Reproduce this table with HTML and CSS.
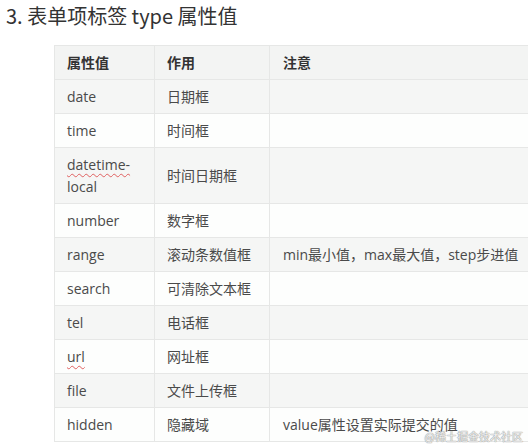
FILE: index.html
```html
<!DOCTYPE html>
<html lang="zh-CN">
<head>
<meta charset="utf-8">
<link rel="stylesheet" href="styles.css">
</head>
<body>
<div class="page">
  <h3 class="title">3. 表单项标签 type 属性值</h3>
  <table class="attr-table">
    <colgroup>
      <col class="c1"><col class="c2"><col class="c3">
    </colgroup>
    <thead>
      <tr><th>属性值</th><th>作用</th><th>注意</th></tr>
    </thead>
    <tbody>
      <tr><td>date</td><td>日期框</td><td></td></tr>
      <tr><td>time</td><td>时间框</td><td></td></tr>
      <tr><td><span class="spell">datetime-</span><br>local</td><td>时间日期框</td><td></td></tr>
      <tr><td>number</td><td>数字框</td><td></td></tr>
      <tr><td>range</td><td>滚动条数值框</td><td>min最小值，max最大值，step步进值</td></tr>
      <tr><td>search</td><td>可清除文本框</td><td></td></tr>
      <tr><td>tel</td><td>电话框</td><td></td></tr>
      <tr><td><span class="spell">url</span></td><td>网址框</td><td></td></tr>
      <tr><td>file</td><td>文件上传框</td><td></td></tr>
      <tr><td>hidden</td><td>隐藏域</td><td>value属性设置实际提交的值</td></tr>
    </tbody>
  </table>
  <div class="watermark">@稀土掘金技术社区</div>
</div>
</body>
</html>
```

FILE: styles.css
```css
html, body {
  margin: 0;
  padding: 0;
  background: #ffffff;
  overflow: hidden;
}
.page {
  position: relative;
  width: 528px;
  height: 446px;
  overflow: hidden;
}
.title {
  margin: 0;
  padding: 2px 0 0 6px;
  font-family: "Noto Sans CJK SC", "Open Sans", sans-serif;
  font-weight: 400;
  font-size: 20px;
  line-height: 28px;
  color: #333333;
}
.attr-table {
  margin: 15px 0 0 54px;
  border-collapse: collapse;
  width: 620px;
  table-layout: fixed;
  font-family: "Open Sans", "Noto Sans CJK SC", sans-serif;
  font-size: 14px;
  color: #4a4a4a;
}
.c1 { width: 100px; }
.c2 { width: 115px; }
.c3 { width: 405px; }
.attr-table th,
.attr-table td {
  border: 1px solid #e6e7e6;
  padding: 6px 12px 5px 12px;
  line-height: 22px;
  text-align: left;
  vertical-align: middle;
}
.attr-table th {
  background: #f3f4f3;
  font-weight: 700;
  color: #333333;
}
.attr-table td:nth-child(3),
.attr-table th:nth-child(3) {
  padding-left: 13px;
}
.attr-table tbody tr:nth-child(odd) td {
  background: #f5f6f5;
}
.attr-table tbody tr:nth-child(even) td {
  background: #fdfefd;
}
.spell {
  text-decoration: underline wavy #e06060;
  text-decoration-thickness: 1px;
  text-underline-offset: 3px;
}
.watermark {
  position: absolute;
  right: 5px;
  bottom: 3px;
  font-family: "Noto Sans CJK SC", sans-serif;
  font-size: 11px;
  line-height: 14px;
  color: rgba(255, 255, 255, 0.85);
  text-shadow: 0 0 1px #888, 0 0 1px #888;
}
```
